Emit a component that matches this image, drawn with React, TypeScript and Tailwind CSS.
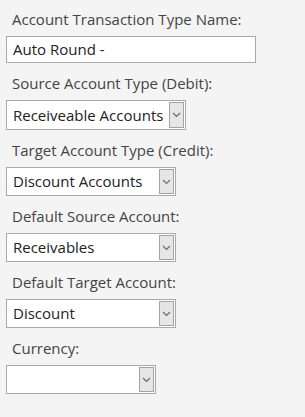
import React from 'react';

const Chevron = () => (
  <svg width="9" height="6" viewBox="0 0 9 6" fill="none">
    <path d="M1 1l3.5 3.5L8 1" stroke="#6b6b6b" strokeWidth="1.2" />
  </svg>
);

const SelectBox: React.FC<{ value?: string; className: string }> = ({ value, className }) => (
  <div className={`flex items-stretch bg-white border border-[#a9a9a9] p-px ${className}`}>
    <div className="flex-1 flex items-center pl-[5px] text-[15px] text-[#222] leading-none whitespace-nowrap overflow-hidden">
      {value}
    </div>
    <div className="w-[15px] flex items-center justify-center bg-[#e6e6e6] border border-[#a3a3a3]">
      <Chevron />
    </div>
  </div>
);

const Label: React.FC<{ children: React.ReactNode }> = ({ children }) => (
  <div className="h-5 mb-[7px] pl-[6px] text-[15px] leading-5 text-[#444]">{children}</div>
);

export default function App() {
  return (
    <div className="w-[305px] h-[417px] bg-[#f4f4f4] pt-[9px] pl-[6px]" style={{ fontFamily: '"Open Sans", "Noto Sans", sans-serif' }}>
      <Label>Account Transaction Type Name:</Label>
      <div className="w-[250px] h-[27px] bg-white border border-[#a9a9a9] flex items-center pl-[6px] text-[15px] text-[#222] mb-[10px]">
        Auto Round -
      </div>

      <Label>Source Account Type (Debit):</Label>
      <SelectBox value="Receiveable Accounts" className="w-[180px] h-[30px] mb-[10px]" />

      <Label>Target Account Type (Credit):</Label>
      <SelectBox value="Discount Accounts" className="w-[170px] h-[29px] mb-[10px]" />

      <Label>Default Source Account:</Label>
      <SelectBox value="Receivables" className="w-[170px] h-[29px] mb-[10px]" />

      <Label>Default Target Account:</Label>
      <SelectBox value="Discount" className="w-[170px] h-[29px] mb-[10px]" />

      <Label>Currency:</Label>
      <SelectBox className="w-[150px] h-[29px]" />
    </div>
  );
}
